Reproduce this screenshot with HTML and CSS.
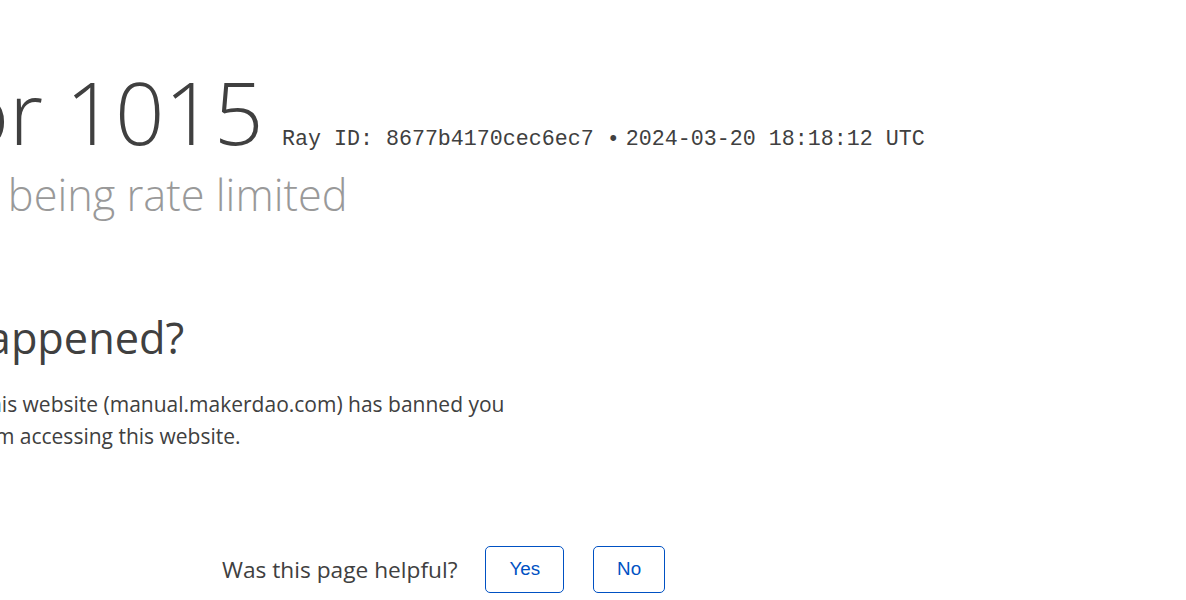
FILE: index.html
```html
<!DOCTYPE html>
<html lang="en">
<head>
<meta charset="utf-8">
<title>Access denied | manual.makerdao.com used Cloudflare to restrict access</title>
<link rel="stylesheet" href="styles.css">
</head>
<body>
<div class="page">
  <div class="overview">
    <h1 class="headline">
      <span class="error-type">Error</span>
      <span class="error-code">1015</span>
      <small class="ray-id">Ray ID: 8677b4170cec6ec7 &bull;<span class="ray-time">2024-03-20 18:18:12 UTC</span></small>
    </h1>
    <h2 class="subheadline">You are being rate limited</h2>
  </div>
  <div class="section">
    <div class="column">
      <h2 class="column-title">What happened?</h2>
      <p class="column-text">The owner of this website (manual.makerdao.com) has banned you temporarily from accessing this website.</p>
    </div>
  </div>
</div>
<div class="feedback">
  <span class="feedback-label">Was this page helpful?</span>
  <button class="feedback-button" type="button">Yes</button>
  <button class="feedback-button" type="button">No</button>
</div>
</body>
</html>
```

FILE: styles.css
```css
html, body {
  margin: 0;
  padding: 0;
  background: #ffffff;
  overflow: hidden;
}

body {
  font-family: "Open Sans", "Noto Sans", sans-serif;
  color: #404040;
  width: 1186px;
  height: 600px;
}

.page {
  margin-left: -157px;
}

.overview {
  padding-top: 59px;
}

.headline {
  margin: 0;
  font-size: 86.7px;
  font-weight: 300;
  line-height: 1.2;
  white-space: nowrap;
  color: #404040;
}

.error-code {
  margin-right: -4px;
}

.ray-id {
  font-family: "Liberation Mono", monospace;
  font-size: 21.67px;
  font-weight: 400;
  color: #404040;
}

.ray-time {
  margin-left: 6px;
}

.subheadline {
  margin: 6px 0 0;
  padding-left: 5px;
  font-size: 43.3px;
  font-weight: 300;
  line-height: 1.2;
  color: #999999;
}

.section {
  padding-top: 91px;
}

.column {
  width: 690px;
}

.column-title {
  margin: 0;
  font-size: 43.3px;
  font-weight: 400;
  line-height: 1.2;
  color: #404040;
}

.column-text {
  margin: 24px 0 0;
  padding-left: 4px;
  font-size: 21px;
  line-height: 32px;
  color: #404040;
}

.feedback {
  display: flex;
  align-items: center;
  margin-top: 94px;
  padding-left: 222px;
}

.feedback-label {
  font-size: 22.7px;
  color: #404040;
  margin-right: 28px;
}

.feedback-button {
  font-family: "Liberation Sans", Arial, sans-serif;
  font-size: 18.8px;
  color: #0051c3;
  background: #ffffff;
  border: 1px solid #0051c3;
  border-radius: 5px;
  height: 47px;
  padding: 0 23px;
  margin-right: 29px;
}
```
